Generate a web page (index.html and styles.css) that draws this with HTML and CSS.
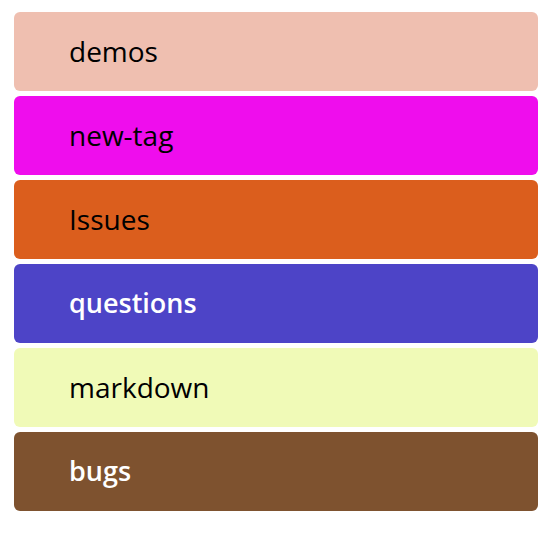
FILE: index.html
```html
<!DOCTYPE html>
<html>
<head>
<meta charset="utf-8">
<link rel="stylesheet" href="styles.css">
</head>
<body>
<ul class="tags">
  <li class="tag tag-demos">demos</li>
  <li class="tag tag-new">new-tag</li>
  <li class="tag tag-issues">Issues</li>
  <li class="tag tag-questions">questions</li>
  <li class="tag tag-markdown">markdown</li>
  <li class="tag tag-bugs">bugs</li>
</ul>
</body>
</html>
```
FILE: styles.css
```css
html, body { margin: 0; padding: 0; background: #fff; }
body { padding: 12px 16px 0 14px; }
.tags {
  list-style: none;
  margin: 0;
  padding: 0;
  display: flex;
  flex-direction: column;
  gap: 5px;
  width: 524px;
}
.tag {
  height: 79px;
  border-radius: 6px;
  display: flex;
  align-items: center;
  padding-left: 55px;
  padding-bottom: 2px;
  font-family: "Open Sans", sans-serif;
  font-size: 28px;
  font-weight: 400;
  color: #000;
  box-sizing: border-box;
}
.tag-demos { background: #efbfb0; }
.tag-new { background: #ef0ded; }
.tag-issues { background: #db5e1d; }
.tag-questions { background: #4d44c7; color: #fff; font-weight: 600; font-size: 27px; }
.tag-markdown { background: #f0fab7; }
.tag-bugs { background: #7e522f; color: #fff; font-weight: 600; font-size: 27px; }
```
